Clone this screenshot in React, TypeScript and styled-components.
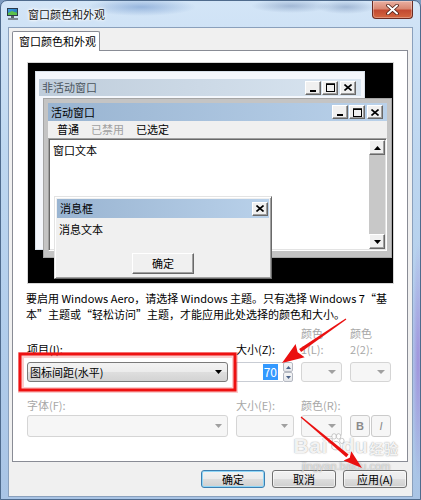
import React from 'react'
import styled, { createGlobalStyle } from 'styled-components'

const cjk = `"Noto Sans CJK SC", "Noto Sans", sans-serif`

const GlobalStyle = createGlobalStyle`
  html, body {
    margin: 0;
    padding: 0;
    background: #7f9cc0;
  }
  body {
    font-family: ${cjk};
    font-size: 11px;
    color: #000;
  }
  * {
    box-sizing: border-box;
  }
`

/* ---------- outer aero frame ---------- */

const Frame = styled.div`
  position: relative;
  width: 421px;
  height: 500px;
  padding: 0 7px 2px;
  display: flex;
  flex-direction: column;
  border: 1px solid #4f6b8d;
  border-radius: 7px 7px 0 0;
  overflow: hidden;
  background:
    radial-gradient(ellipse 55px 9px at 140px 6px, rgba(80, 125, 190, 0.45), transparent),
    radial-gradient(ellipse 40px 7px at 290px 5px, rgba(70, 100, 150, 0.35), transparent),
    radial-gradient(ellipse 30px 7px at 345px 6px, rgba(70, 100, 150, 0.35), transparent),
    radial-gradient(ellipse 6px 120px at 417px 360px, rgba(150, 110, 210, 0.6), transparent),
    linear-gradient(180deg, #d3e5f7 0%, #bed7f0 30%, #b0cceb 70%, #a9c4e5 100%);
`

const TitleBar = styled.div`
  height: 26px;
  margin: 0 -7px;
  padding: 0 7px 0 5px;
  display: flex;
  align-items: center;
  flex-shrink: 0;
`

const TitleText = styled.span`
  margin-left: 8px;
  font-size: 11px;
  color: #151515;
  text-shadow: 0 0 5px #fff, 0 0 3px #fff, 0 0 2px #fff;
`

const CloseBox = styled.div`
  margin-left: auto;
  align-self: flex-start;
  width: 41px;
  height: 18px;
  border: 1px solid #6b2b22;
  border-top: none;
  border-radius: 0 0 4px 4px;
  background: linear-gradient(180deg, #eab0a2 0%, #d98873 45%, #c34a31 55%, #d4663f 100%);
  box-shadow: inset 0 0 0 1px rgba(255, 255, 255, 0.3);
  display: flex;
  align-items: center;
  justify-content: center;
`

const Client = styled.div`
  height: 470px;
  background: #f0f0f0;
  border: 1px solid #8aa0bc;
  padding: 3px 4px 0 3px;
  display: flex;
  flex-direction: column;
`

/* ---------- tab ---------- */

const TabStrip = styled.div`
  height: 19px;
  display: flex;
  position: relative;
  z-index: 1;
`

const Tab = styled.div`
  width: 88px;
  height: 20px;
  background: #fff;
  border: 1px solid #898c95;
  border-bottom: none;
  border-radius: 2px 2px 0 0;
  padding-left: 6px;
  line-height: 18px;
`

const TabPanel = styled.div`
  width: 396px;
  height: 412px;
  background: #fff;
  border: 1px solid #898c95;
  padding: 11px 0 0 14px;
`

/* ---------- preview canvas ---------- */

const Preview = styled.div`
  position: relative;
  width: 367px;
  height: 222px;
  border: 1px solid #d6d6d6;
  background: #000;
`

const InactiveWin = styled.div`
  position: absolute;
  left: 7px;
  top: 8px;
  width: 330px;
  height: 179px;
  background: #f4f7fc;
  border: 1px solid #d9e1ea;
  padding: 7px 3px 0;
`

const ActiveWin = styled.div`
  position: absolute;
  left: 15px;
  top: 35px;
  width: 349px;
  height: 160px;
  background: #c4c4c4;
  border: 1px solid #a5a5a5;
  padding: 4px 4px 6px;
  display: flex;
  flex-direction: column;
`

const MsgWin = styled.div`
  position: absolute;
  left: 26px;
  top: 133px;
  width: 218px;
  height: 83px;
  background: #f0f0f0;
  border: 1px solid;
  border-color: #e3e3e3 #696969 #696969 #e3e3e3;
  box-shadow: inset 1px 1px #fff, inset -1px -1px #a0a0a0;
  padding: 2px 2px 4px;
  display: flex;
  flex-direction: column;
`

const Caption = styled.div<{ $active?: boolean; $h: number; $padRight: number }>`
  height: ${p => p.$h}px;
  flex-shrink: 0;
  display: flex;
  align-items: center;
  padding: 0 ${p => p.$padRight}px 0 3px;
  background: ${p =>
    p.$active
      ? 'linear-gradient(90deg, #99b4d1 0%, #b9d1ea 100%)'
      : 'linear-gradient(90deg, #bfcddb 0%, #d9e5f1 100%)'};
  color: ${p => (p.$active ? '#000' : '#4a545c')};
  font-size: 11px;
  line-height: 1;
`

const CapButtons = styled.div`
  margin-left: auto;
  display: flex;
  gap: 1px;
`

const CapButton = styled.div<{ $gapLeft?: boolean }>`
  width: 16px;
  height: 14px;
  margin-left: ${p => (p.$gapLeft ? '1px' : '0')};
  background: #f0f0f0;
  border: 1px solid;
  border-color: #fff #696969 #696969 #fff;
  box-shadow: inset -1px -1px #a0a0a0;
  display: flex;
  align-items: center;
  justify-content: center;
`

const MenuBar = styled.div`
  height: 17px;
  flex-shrink: 0;
  background: #f0f0f0;
  display: flex;
  align-items: center;
  padding-left: 3px;
`

const MenuItem = styled.span<{ $disabled?: boolean }>`
  padding: 0 6px;
  color: ${p => (p.$disabled ? '#a0a0a0' : '#000')};
  line-height: 1;
`

const TextArea = styled.div`
  flex: 1;
  display: flex;
  background: #fff;
  border: 1px solid;
  border-color: #a0a0a0 #fff #fff #a0a0a0;
  box-shadow: inset 1px 1px #696969, inset -1px -1px #e3e3e3;
  padding: 1px;
`

const TextBody = styled.div`
  flex: 1;
  padding: 5px 0 0 3px;
  line-height: 1;
`

const ScrollBar = styled.div`
  width: 16px;
  background: #c8c8c8;
  display: flex;
  flex-direction: column;
  justify-content: space-between;
`

const ScrollBtn = styled.div`
  height: 15px;
  background: #f0f0f0;
  border: 1px solid;
  border-color: #fff #696969 #696969 #fff;
  box-shadow: inset -1px -1px #a0a0a0;
  display: flex;
  align-items: center;
  justify-content: center;
`

const MsgBody = styled.div`
  padding: 6px 0 0 2px;
  line-height: 1;
`

const ClassicButton = styled.div`
  margin-top: auto;
  align-self: center;
  width: 62px;
  height: 21px;
  background: #f0f0f0;
  border: 1px solid;
  border-color: #fff #696969 #696969 #fff;
  box-shadow: inset -1px -1px #a0a0a0;
  display: flex;
  align-items: center;
  justify-content: center;
  line-height: 1;
`

/* ---------- description and fields ---------- */

const Description = styled.p`
  margin: 6px 0 0 -1px;
  line-height: 16px;
  font-size: 11px;
  white-space: nowrap;
`

const FormGrid = styled.div`
  margin-top: 3px;
  display: grid;
  grid-template-columns: 209px 65px 49px 41px;
  row-gap: 15px;
  align-items: end;
`

const Cell = styled.div<{ $gap: number }>`
  display: flex;
  flex-direction: column;
  gap: ${p => p.$gap}px;
`

const Label = styled.div<{ $dim?: boolean }>`
  line-height: 16px;
  color: ${p => (p.$dim ? '#a7a7a7' : '#000')};
  white-space: nowrap;
`

const Combo = styled.div<{ $w: number; $h: number; $disabled?: boolean }>`
  width: ${p => p.$w}px;
  height: ${p => p.$h}px;
  border: 1px solid ${p => (p.$disabled ? '#d5d5d5' : '#7a7a7a')};
  border-radius: 3px;
  background: ${p =>
    p.$disabled
      ? '#f6f6f6'
      : 'linear-gradient(180deg, #f3f3f3 0%, #ececec 48%, #dedede 52%, #d3d3d3 100%)'};
  display: flex;
  align-items: center;
  padding: 0 5px 0 2px;
  line-height: 1;
`

const ComboText = styled.span`
  flex: 1;
`

const SpinWrap = styled.div`
  display: flex;
  width: 57px;
  height: 20px;
`

const SpinInput = styled.div`
  width: 47px;
  height: 20px;
  background: #fff;
  border: 1px solid #c9cdd4;
  border-right: none;
  display: flex;
  align-items: center;
  justify-content: flex-end;
  padding-right: 5px;
`

const Selected = styled.span`
  background: #3399ff;
  color: #fff;
  line-height: 16px;
  padding: 0 1px;
  font-size: 12px;
`

const SpinButtons = styled.div`
  width: 10px;
  display: flex;
  flex-direction: column;
`

const SpinBtn = styled.div`
  flex: 1;
  border: 1px solid #b5b9c2;
  border-radius: 2px;
  background: linear-gradient(180deg, #f7f7f7, #e4e6ea);
  display: flex;
  align-items: center;
  justify-content: center;
`

const StyleButtons = styled.div`
  display: flex;
  gap: 1px;
`

const StyleBtn = styled.div<{ $italic?: boolean }>`
  width: 20px;
  height: 22px;
  border: 1px solid #cbcbcb;
  border-radius: 3px;
  background: #f6f6f6;
  display: flex;
  align-items: center;
  justify-content: center;
  color: #8a8a8a;
  font-family: "Liberation Sans", Arial, sans-serif;
  font-size: 11px;
  font-weight: ${p => (p.$italic ? 400 : 700)};
  font-style: ${p => (p.$italic ? 'italic' : 'normal')};
`

/* ---------- bottom buttons ---------- */

const ButtonRow = styled.div`
  margin-top: 8px;
  display: flex;
  justify-content: flex-end;
  gap: 7px;
  padding-right: 1px;
`

const DialogButton = styled.div<{ $default?: boolean }>`
  width: 64px;
  height: 18px;
  border: 1px solid ${p => (p.$default ? '#3c7fb1' : '#707070')};
  border-radius: 3px;
  background: linear-gradient(180deg, #f2f2f2 0%, #ebebeb 48%, #dddddd 52%, #cfcfcf 100%);
  box-shadow: ${p =>
    p.$default ? 'inset 0 0 0 1px #8fd6f7' : 'inset 0 0 0 1px rgba(255,255,255,0.6)'};
  display: flex;
  align-items: center;
  justify-content: center;
  line-height: 1;
`

/* ---------- overlays ---------- */

const Overlay = styled.svg`
  position: absolute;
  left: -1px;
  top: -1px;
  pointer-events: none;
`

const Watermark = styled.div`
  position: absolute;
  left: 292px;
  top: 434px;
  width: 106px;
  display: flex;
  flex-direction: column;
  align-items: center;
  pointer-events: none;
  color: rgba(255, 255, 255, 0.9);
  text-shadow: 0 0 1px rgba(110, 110, 110, 0.6), 0 0 2px rgba(140, 140, 140, 0.35);
`

const MarkLine = styled.div`
  display: flex;
  align-items: flex-end;
  font-family: "Liberation Sans", Arial, sans-serif;
  font-weight: 700;
  font-size: 21px;
  line-height: 22px;
  letter-spacing: 0.5px;
`

const PawSlot = styled.span`
  align-self: flex-start;
  margin: -2px -3px 0 -1px;
`

const MarkCjk = styled.span`
  font-family: ${cjk};
  font-weight: 700;
  font-size: 14px;
  line-height: 17px;
  margin-left: 1px;
`

const MarkUrl = styled.div`
  margin-top: 4px;
  font-family: "Liberation Sans", Arial, sans-serif;
  font-size: 11px;
  line-height: 11px;
  color: rgba(255, 255, 255, 0.6);
`

/* ---------- glyphs ---------- */

const Min = () => (
  <svg width="8" height="8" viewBox="0 0 8 8">
    <rect x="1" y="6" width="6" height="2" fill="#000" />
  </svg>
)

const Max = () => (
  <svg width="9" height="9" viewBox="0 0 9 9">
    <rect x="0.5" y="1" width="8" height="7.5" fill="none" stroke="#000" />
    <rect x="0" y="0.5" width="9" height="1.5" fill="#000" />
  </svg>
)

const Close = () => (
  <svg width="8" height="7" viewBox="0 0 8 7">
    <path d="M0.5 0.5 L7.5 6.5 M7.5 0.5 L0.5 6.5" stroke="#000" strokeWidth="1.6" />
  </svg>
)

const Tri = ({ up, color = '#000', w = 7, h = 4 }: { up?: boolean; color?: string; w?: number; h?: number }) => (
  <svg width={w} height={h} viewBox={`0 0 ${w} ${h}`}>
    <polygon points={up ? `0,${h} ${w},${h} ${w / 2},0` : `0,0 ${w},0 ${w / 2},${h}`} fill={color} />
  </svg>
)

const CapSet = () => (
  <CapButtons>
    <CapButton><Min /></CapButton>
    <CapButton><Max /></CapButton>
    <CapButton $gapLeft><Close /></CapButton>
  </CapButtons>
)

const AppIcon = () => (
  <svg width="14" height="14" viewBox="0 0 14 14">
    <defs>
      <linearGradient id="scr" x1="0" y1="0" x2="1" y2="1">
        <stop offset="0" stopColor="#3fa0e0" />
        <stop offset="0.55" stopColor="#2a7fc8" />
        <stop offset="1" stopColor="#3fb04a" />
      </linearGradient>
    </defs>
    <rect x="1" y="1" width="11" height="8" fill="#2b3a4a" />
    <rect x="2" y="2" width="9" height="6" fill="url(#scr)" />
    <path d="M2 6 L6 4 L11 6 L11 8 L2 8 Z" fill="#5cc04a" />
    <rect x="5" y="9" width="3" height="2" fill="#59626c" />
    <rect x="2" y="11" width="10" height="2" fill="#7d8893" />
  </svg>
)

const CloseGlyph = () => (
  <svg width="13" height="11" viewBox="0 0 13 11">
    <path d="M2 1.5 L11 9.5 M11 1.5 L2 9.5" stroke="#4a1c14" strokeWidth="3.6" strokeLinecap="round" />
    <path d="M2 1.5 L11 9.5 M11 1.5 L2 9.5" stroke="#fff" strokeWidth="2" strokeLinecap="round" />
  </svg>
)

const Paw = () => (
  <svg width="18" height="18" viewBox="0 0 16 16">
    <g fill="rgba(255,255,255,0.9)" stroke="rgba(120,120,120,0.55)" strokeWidth="0.6">
      <ellipse cx="3" cy="7" rx="2" ry="2.4" />
      <ellipse cx="6.3" cy="3" rx="2" ry="2.4" />
      <ellipse cx="10.3" cy="3" rx="2" ry="2.4" />
      <ellipse cx="13.2" cy="7" rx="2" ry="2.4" />
      <path d="M8 7.5 C5 7.5 3.5 11 4.5 13.5 C5.5 15.5 10.5 15.5 11.5 13.5 C12.5 11 11 7.5 8 7.5 Z" />
    </g>
  </svg>
)

// tapering red arrow: tail point, tip point, head length and half width
const Arrow = ({ x1, y1, x2, y2, head, half }: { x1: number; y1: number; x2: number; y2: number; head: number; half: number }) => {
  const dx = x2 - x1
  const dy = y2 - y1
  const len = Math.hypot(dx, dy)
  const ux = dx / len
  const uy = dy / len
  const px = -uy
  const py = ux
  const bx = x2 - ux * head
  const by = y2 - uy * head
  const shaft = [
    [x1 + px * 0.6, y1 + py * 0.6],
    [bx + px * 1.8, by + py * 1.8],
    [bx - px * 1.8, by - py * 1.8],
    [x1 - px * 0.6, y1 - py * 0.6],
  ]
  const tip = [
    [x2, y2],
    [bx + px * half, by + py * half],
    [bx + ux * 3, by + uy * 3],
    [bx - px * half, by - py * half],
  ]
  const pts = (a: number[][]) => a.map(p => p.join(',')).join(' ')
  return (
    <g fill="#ea1010">
      <polygon points={pts(shaft)} />
      <polygon points={pts(tip)} />
    </g>
  )
}

export default function App() {
  return (
    <>
      <GlobalStyle />
      <Frame>
        <TitleBar>
          <AppIcon />
          <TitleText>窗口颜色和外观</TitleText>
          <CloseBox>
            <CloseGlyph />
          </CloseBox>
        </TitleBar>

        <Client>
          <TabStrip>
            <Tab>窗口颜色和外观</Tab>
          </TabStrip>
          <TabPanel>
            <Preview>
              <InactiveWin>
                <Caption $h={17} $padRight={5}>
                  非活动窗口
                  <CapSet />
                </Caption>
              </InactiveWin>

              <ActiveWin>
                <Caption $active $h={18} $padRight={4}>
                  活动窗口
                  <CapSet />
                </Caption>
                <MenuBar>
                  <MenuItem>普通</MenuItem>
                  <MenuItem $disabled>已禁用</MenuItem>
                  <MenuItem>已选定</MenuItem>
                </MenuBar>
                <TextArea>
                  <TextBody>窗口文本</TextBody>
                  <ScrollBar>
                    <ScrollBtn><Tri up w={7} h={4} /></ScrollBtn>
                    <ScrollBtn><Tri w={7} h={4} /></ScrollBtn>
                  </ScrollBar>
                </TextArea>
              </ActiveWin>

              <MsgWin>
                <Caption $active $h={19} $padRight={1}>
                  消息框
                  <CapButtons>
                    <CapButton><Close /></CapButton>
                  </CapButtons>
                </Caption>
                <MsgBody>消息文本</MsgBody>
                <ClassicButton>确定</ClassicButton>
              </MsgWin>
            </Preview>

            <Description>
              要启用 Windows Aero，请选择 Windows 主题。只有选择 Windows 7“基
              <br />
              本”主题或“轻松访问”主题，才能应用此处选择的颜色和大小。
            </Description>

            <FormGrid>
              <Cell $gap={5}>
                <Label>项目(I):</Label>
                <Combo $w={201} $h={20}>
                  <ComboText>图标间距(水平)</ComboText>
                  <Tri w={7} h={4} />
                </Combo>
              </Cell>
              <Cell $gap={5}>
                <Label>大小(Z):</Label>
                <SpinWrap>
                  <SpinInput>
                    <Selected>70</Selected>
                  </SpinInput>
                  <SpinButtons>
                    <SpinBtn><Tri up w={5} h={3} color="#4a6288" /></SpinBtn>
                    <SpinBtn><Tri w={5} h={3} color="#4a6288" /></SpinBtn>
                  </SpinButtons>
                </SpinWrap>
              </Cell>
              <Cell $gap={5}>
                <Label $dim>颜色<br />1(L):</Label>
                <Combo $w={41} $h={20} $disabled>
                  <ComboText />
                  <Tri w={8} h={4} color="#a0a0a0" />
                </Combo>
              </Cell>
              <Cell $gap={5}>
                <Label $dim>颜色<br />2(2):</Label>
                <Combo $w={41} $h={20} $disabled>
                  <ComboText />
                  <Tri w={8} h={4} color="#a0a0a0" />
                </Combo>
              </Cell>

              <Cell $gap={2}>
                <Label $dim>字体(F):</Label>
                <Combo $w={201} $h={22} $disabled>
                  <ComboText />
                  <Tri w={7} h={4} color="#a0a0a0" />
                </Combo>
              </Cell>
              <Cell $gap={2}>
                <Label $dim>大小(E):</Label>
                <Combo $w={58} $h={22} $disabled>
                  <ComboText />
                  <Tri w={7} h={4} color="#a0a0a0" />
                </Combo>
              </Cell>
              <Cell $gap={2}>
                <Label $dim>颜色(R):</Label>
                <Combo $w={41} $h={22} $disabled>
                  <ComboText />
                  <Tri w={8} h={4} color="#a0a0a0" />
                </Combo>
              </Cell>
              <Cell $gap={2}>
                <StyleButtons>
                  <StyleBtn>B</StyleBtn>
                  <StyleBtn $italic>I</StyleBtn>
                </StyleButtons>
              </Cell>
            </FormGrid>
          </TabPanel>

          <ButtonRow>
            <DialogButton $default>确定</DialogButton>
            <DialogButton>取消</DialogButton>
            <DialogButton>应用(A)</DialogButton>
          </ButtonRow>
        </Client>

        <Watermark>
          <MarkLine>
            Bai
            <PawSlot>
              <Paw />
            </PawSlot>
            du
            <MarkCjk>经验</MarkCjk>
          </MarkLine>
          <MarkUrl>jingyan.baidu.com</MarkUrl>
        </Watermark>

        <Overlay width="421" height="500" viewBox="0 0 421 500">
          <rect x="21" y="355" width="214" height="35" fill="none" stroke="rgba(235,60,60,0.25)" strokeWidth="6" />
          <rect x="20" y="354" width="215" height="36" fill="none" stroke="#ee1111" strokeWidth="3" />
          <Arrow x1={346} y1={319} x2={282} y2={363} head={22} half={8} />
          <Arrow x1={301} y1={417} x2={362} y2={468} head={19} half={6} />
        </Overlay>
      </Frame>
    </>
  )
}
